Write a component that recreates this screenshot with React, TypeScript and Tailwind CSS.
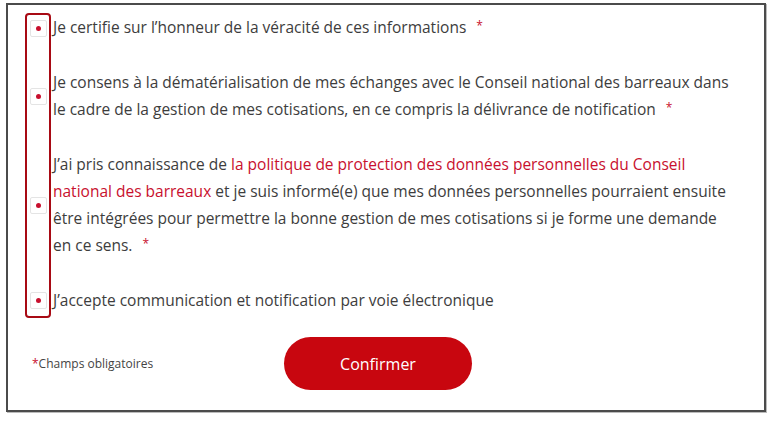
import React from "react";

const Req = () => <span className="ml-[6px] text-[#c8102e] text-[12px] relative top-[-3px]">*</span>;

function Box() {
    return (
        <div className="w-[17px] h-[17px] shrink-0 rounded-[2px] border border-[#e4e4e4] bg-white flex items-center justify-center">
            <span className="w-[5px] h-[5px] rounded-full bg-[#c8102e]" />
        </div>
    );
}

function Item({ children }: { children: React.ReactNode }) {
    return (
        <div className="flex items-center">
            <div className="w-[26px] flex justify-center shrink-0">
                <Box />
            </div>
            <p className="ml-[2px] w-[676px]">{children}</p>
        </div>
    );
}

export default function App() {
    return (
        <div className="w-[772px] h-[422px] bg-white" style={{ fontFamily: '"Open Sans", "Noto Sans", sans-serif' }}>
            <div className="ml-[6px] mt-[3px] w-[760px] h-[409px] border-2 border-[#4b4b4b] shadow-[1px_1px_0_#bbb]">
                {/* required checkboxes */}
                <div className="relative ml-[17px] mt-[8px] text-[15.5px] leading-[27px] text-[#3d3d3d]">
                    <div className="absolute left-0 top-0 w-[26px] h-[305px] border-2 border-[#a80a14] rounded-[4px]" />
                    <div className="pt-[1px] flex flex-col gap-[27px]">
                        <Item>
                            Je certifie sur l’honneur de la véracité de ces informations <Req />
                        </Item>
                        <Item>
                            Je consens à la dématérialisation de mes échanges avec le Conseil national des barreaux dans le cadre de la gestion de mes cotisations, en ce compris la délivrance de notification <Req />
                        </Item>
                        <Item>
                            J’ai pris connaissance de{" "}
                            <span className="text-[#c8102e]">la politique de protection des données personnelles du Conseil national des barreaux</span>{" "}
                            et je suis informé(e) que mes données personnelles pourraient ensuite être intégrées pour permettre la bonne gestion de mes cotisations si je forme une demande en ce sens. <Req />
                        </Item>
                        <Item>J’accepte communication et notification par voie électronique</Item>
                    </div>
                </div>

                <div className="flex items-center mt-[23px]">
                    <p className="ml-[24px] w-[252px] text-[12px] text-[#444]">
                        <span className="text-[#c8102e]">*</span>Champs obligatoires
                    </p>
                    <button className="w-[188px] h-[53px] rounded-full bg-[#c8060f] text-white text-[16px]">
                        Confirmer
                    </button>
                </div>
            </div>
        </div>
    );
}
